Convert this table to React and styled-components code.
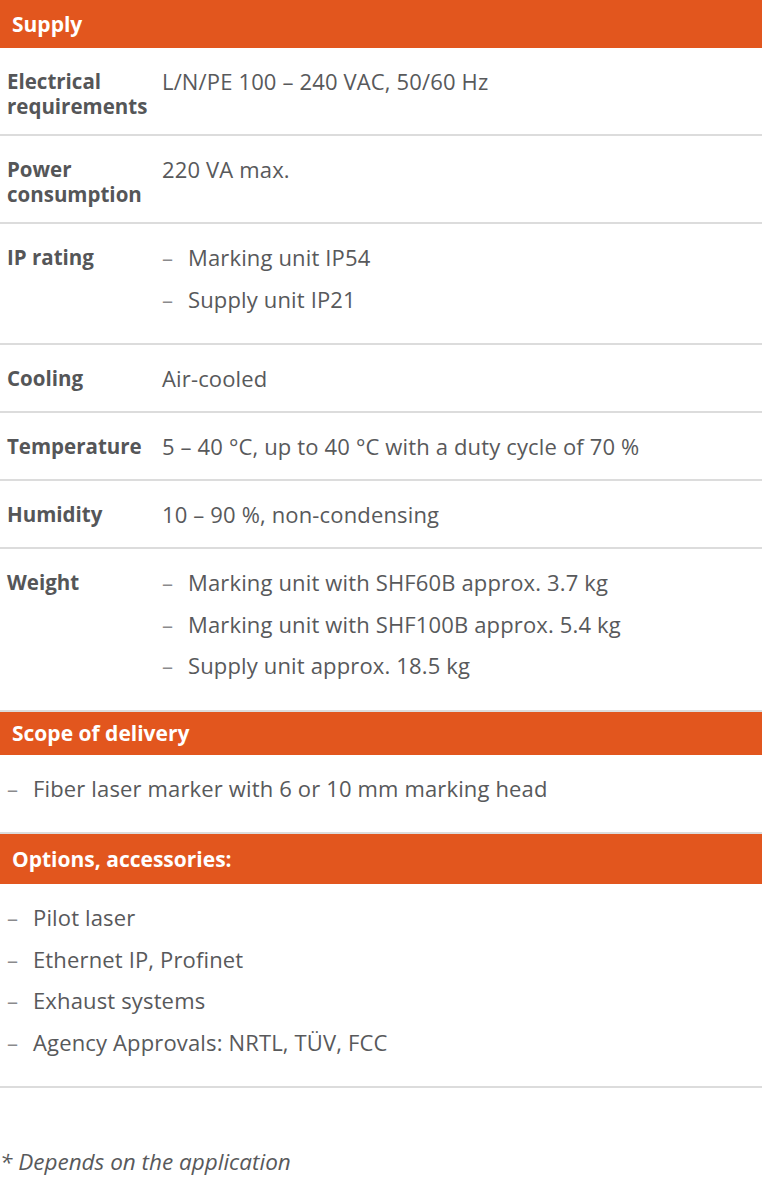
import React from "react";
import styled, { createGlobalStyle } from "styled-components";

const GlobalStyle = createGlobalStyle`
  body {
    margin: 0;
    background: #ffffff;
    font-family: "Open Sans", "Noto Sans", sans-serif;
  }
`;

const Sheet = styled.div`
  width: 762px;
  color: #58595b;
  font-size: 22px;
  letter-spacing: 0.15px;
`;

const SectionHeader = styled.div`
  height: ${(p) => p.$height}px;
  display: flex;
  align-items: center;
  padding-left: 12px;
  background: #e2561e;
  color: #ffffff;
  font-weight: 700;
  font-size: 21px;
  letter-spacing: 0;
  box-sizing: border-box;
`;

const Row = styled.div`
  display: grid;
  grid-template-columns: 155px 1fr;
  padding: 21px 0 15px 7px;
  min-height: 68px;
  box-sizing: border-box;
  border-bottom: 2px solid #dcdcdc;
  line-height: 25px;
`;

const Label = styled.div`
  font-weight: 700;
  font-size: 20.5px;
  color: #555658;
  letter-spacing: 0;
  white-space: pre-line;
`;

const Value = styled.div``;

const Block = styled.div`
  padding: 21px 0 15px 7px;
  border-bottom: 2px solid #dcdcdc;
  line-height: 25px;
`;

const DashList = styled.ul`
  list-style: none;
  margin: 0;
  padding: 0;
`;

const DashItem = styled.li`
  display: flex;
  margin-bottom: 16.5px;
  &::before {
    content: "–";
    width: 26px;
    flex: none;
    color: #8a8a8c;
  }
`;

const Footnote = styled.p`
  margin: 61px 0 0 0;
  font-style: italic;
  font-size: 22.5px;
  line-height: 26px;
  letter-spacing: 0;
  color: #58595b;
`;

const specs = [
  { label: "Electrical\nrequirements", value: "L/N/PE 100 – 240 VAC, 50/60 Hz" },
  { label: "Power\nconsumption", value: "220 VA max." },
  { label: "IP rating", list: ["Marking unit IP54", "Supply unit IP21"] },
  { label: "Cooling", value: "Air-cooled" },
  { label: "Temperature", value: "5 – 40 °C, up to 40 °C with a duty cycle of 70 %" },
  { label: "Humidity", value: "10 – 90 %, non-condensing" },
  {
    label: "Weight",
    list: [
      "Marking unit with SHF60B approx. 3.7 kg",
      "Marking unit with SHF100B approx. 5.4 kg",
      "Supply unit approx. 18.5 kg",
    ],
  },
];

const options = [
  "Pilot laser",
  "Ethernet IP, Profinet",
  "Exhaust systems",
  "Agency Approvals: NRTL, TÜV, FCC",
];

export default function App() {
  return (
    <>
      <GlobalStyle />
      <Sheet>
        <SectionHeader $height={48}>Supply</SectionHeader>
        {specs.map((s) => (
          <Row key={s.label}>
            <Label>{s.label}</Label>
            {s.list ? (
              <DashList>
                {s.list.map((item) => (
                  <DashItem key={item}>{item}</DashItem>
                ))}
              </DashList>
            ) : (
              <Value>{s.value}</Value>
            )}
          </Row>
        ))}

        <SectionHeader $height={43}>Scope of delivery</SectionHeader>
        <Block>
          <DashList>
            <DashItem>Fiber laser marker with 6 or 10 mm marking head</DashItem>
          </DashList>
        </Block>

        <SectionHeader $height={50}>Options, accessories:</SectionHeader>
        <Block>
          <DashList>
            {options.map((o) => (
              <DashItem key={o}>{o}</DashItem>
            ))}
          </DashList>
        </Block>

        <Footnote>* Depends on the application</Footnote>
      </Sheet>
    </>
  );
}
